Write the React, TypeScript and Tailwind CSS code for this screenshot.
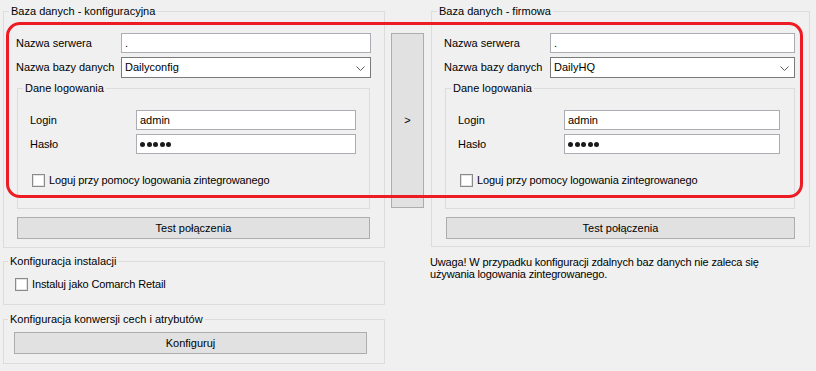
import React from 'react';

interface GroupBoxProps {
  title: string;
  className?: string;
  legendClass?: string;
  children: React.ReactNode;
}

// WinForms-like group box built on fieldset/legend
function GroupBox({ title, className = '', legendClass = 'ml-[5px]', children }: GroupBoxProps) {
  return (
    <fieldset className={`border border-[#dcdcdc] ${className}`}>
      <legend className={`px-[2px] leading-[13px] ${legendClass}`}>{title}</legend>
      {children}
    </fieldset>
  );
}

function TextBox({ value, className = '' }: { value: string; className?: string }) {
  return (
    <div className={`h-[20px] bg-white border border-[#abadb3] pl-[3px] flex items-center ${className}`}>
      {value}
    </div>
  );
}

function PasswordBox({ className = '' }: { className?: string }) {
  return (
    <div className={`h-[20px] bg-white border border-[#abadb3] pl-[3px] flex items-center gap-[1.5px] ${className}`}>
      {[0, 1, 2, 3, 4].map((i) => (
        <span key={i} className="w-[5px] h-[5px] rounded-full bg-[#1a1a1a]" />
      ))}
    </div>
  );
}

function ComboBox({ value, className = '' }: { value: string; className?: string }) {
  return (
    <div className={`h-[21px] bg-white border border-[#7a7a7a] pl-[3px] pr-[5px] flex items-center justify-between ${className}`}>
      <span>{value}</span>
      <svg width="9" height="5" viewBox="0 0 9 5" className="mt-px">
        <polyline points="0.5,0.5 4.5,4.5 8.5,0.5" fill="none" stroke="#5a5a5a" strokeWidth="1" />
      </svg>
    </div>
  );
}

function CheckBox({ label, className = '' }: { label: string; className?: string }) {
  return (
    <div className={`flex items-center gap-[4px] ${className}`}>
      <span className="w-[13px] h-[13px] border border-[#8a8a8a] bg-white shadow-[inset_0_0_0_1px_#e3e3e3] shrink-0" />
      <span className="leading-[13px] tracking-[-0.12px]">{label}</span>
    </div>
  );
}

function Button({ label, className = '' }: { label: string; className?: string }) {
  return (
    <div className={`h-[22px] bg-[#e1e1e1] border border-[#adadad] flex items-center justify-center ${className}`}>
      {label}
    </div>
  );
}

function Row({ label, labelW, children, className = '' }: { label: string; labelW: string; children: React.ReactNode; className?: string }) {
  return (
    <div className={`flex items-center pl-[12px] ${className}`}>
      <span className={`${labelW} shrink-0`}>{label}</span>
      {children}
    </div>
  );
}

interface DbPanelProps {
  title: string;
  dbName: string;
  right?: boolean;
}

function DbPanel({ title, dbName, right }: DbPanelProps) {
  return (
    <GroupBox title={title} className={right ? 'w-[379px]' : 'w-[382px]'}>
      <div className={right ? 'pt-[15px] pb-[7px]' : 'pt-[15px] pb-[8px]'}>
        <Row label="Nazwa serwera" labelW={right ? 'w-[106px]' : 'w-[105px]'}>
          <TextBox value="." className={right ? 'w-[245px]' : 'w-[250px]'} />
        </Row>
        <Row label="Nazwa bazy danych" labelW={right ? 'w-[106px]' : 'w-[105px]'} className="mt-[4px]">
          <ComboBox value={dbName} className={right ? 'w-[245px]' : 'w-[250px]'} />
        </Row>

        <GroupBox
          title="Dane logowania"
          className={right ? 'mt-[4px] ml-[13px] w-[350px]' : 'mt-[4px] ml-[13px] w-[353px]'}
          legendClass="ml-[5px]"
        >
          <div className="pt-[15px] pb-[21px]">
            <Row label="Login" labelW="w-[106px]">
              <TextBox value="admin" className={right ? 'w-[216px]' : 'w-[220px]'} />
            </Row>
            <Row label="Hasło" labelW="w-[106px]" className="mt-[4px]">
              <PasswordBox className={right ? 'w-[216px]' : 'w-[220px]'} />
            </Row>
            <CheckBox label="Loguj przy pomocy logowania zintegrowanego" className="mt-[20px] pl-[14px]" />
          </div>
        </GroupBox>

        <Button label="Test połączenia" className={right ? 'mt-[8px] ml-[14px] w-[349px]' : 'mt-[8px] ml-[13px] w-[353px]'} />
      </div>
    </GroupBox>
  );
}

export default function App() {
  return (
    <div className="relative w-[816px] h-[371px] bg-[#f0f0f0] text-[11px] text-black font-['Liberation_Sans',Arial,sans-serif] overflow-hidden">
      <div className="flex items-start pl-[3px] pt-[5px]">
        {/* Left column */}
        <div className="flex flex-col">
          <DbPanel title="Baza danych - konfiguracyjna" dbName="Dailyconfig" />

          <GroupBox title="Konfiguracja instalacji" className="mt-[7px] w-[382px]" legendClass="ml-[4px]">
            <div className="pt-[10px] pb-[13px]">
              <CheckBox label="Instaluj jako Comarch Retail" className="pl-[11px]" />
            </div>
          </GroupBox>

          <GroupBox title="Konfiguracja konwersji cech i atrybutów" className="mt-[8px] w-[382px]" legendClass="ml-[4px]">
            <div className="pt-[6px] pb-[9px]">
              <Button label="Konfiguruj" className="ml-[10px] w-[353px]" />
            </div>
          </GroupBox>
        </div>

        {/* Copy button */}
        <div className="ml-[6px] mt-[28px] w-[33px] h-[175px] bg-[#e1e1e1] border border-[#adadad] flex items-center justify-center">
          &gt;
        </div>

        {/* Right column */}
        <div className="ml-[7px] flex flex-col">
          <DbPanel title="Baza danych - firmowa" dbName="DailyHQ" right />
          <p className="mt-[9px] -ml-px leading-[12px] tracking-[-0.15px]">
            Uwaga! W przypadku konfiguracji zdalnych baz danych nie zaleca się
            <br />
            używania logowania zintegrowanego.
          </p>
        </div>
      </div>

      {/* Red highlight annotation */}
      <div className="absolute left-[6px] top-[22px] w-[797px] h-[176px] border-[3px] border-[#ed1c24] rounded-[14px] pointer-events-none" />
    </div>
  );
}
